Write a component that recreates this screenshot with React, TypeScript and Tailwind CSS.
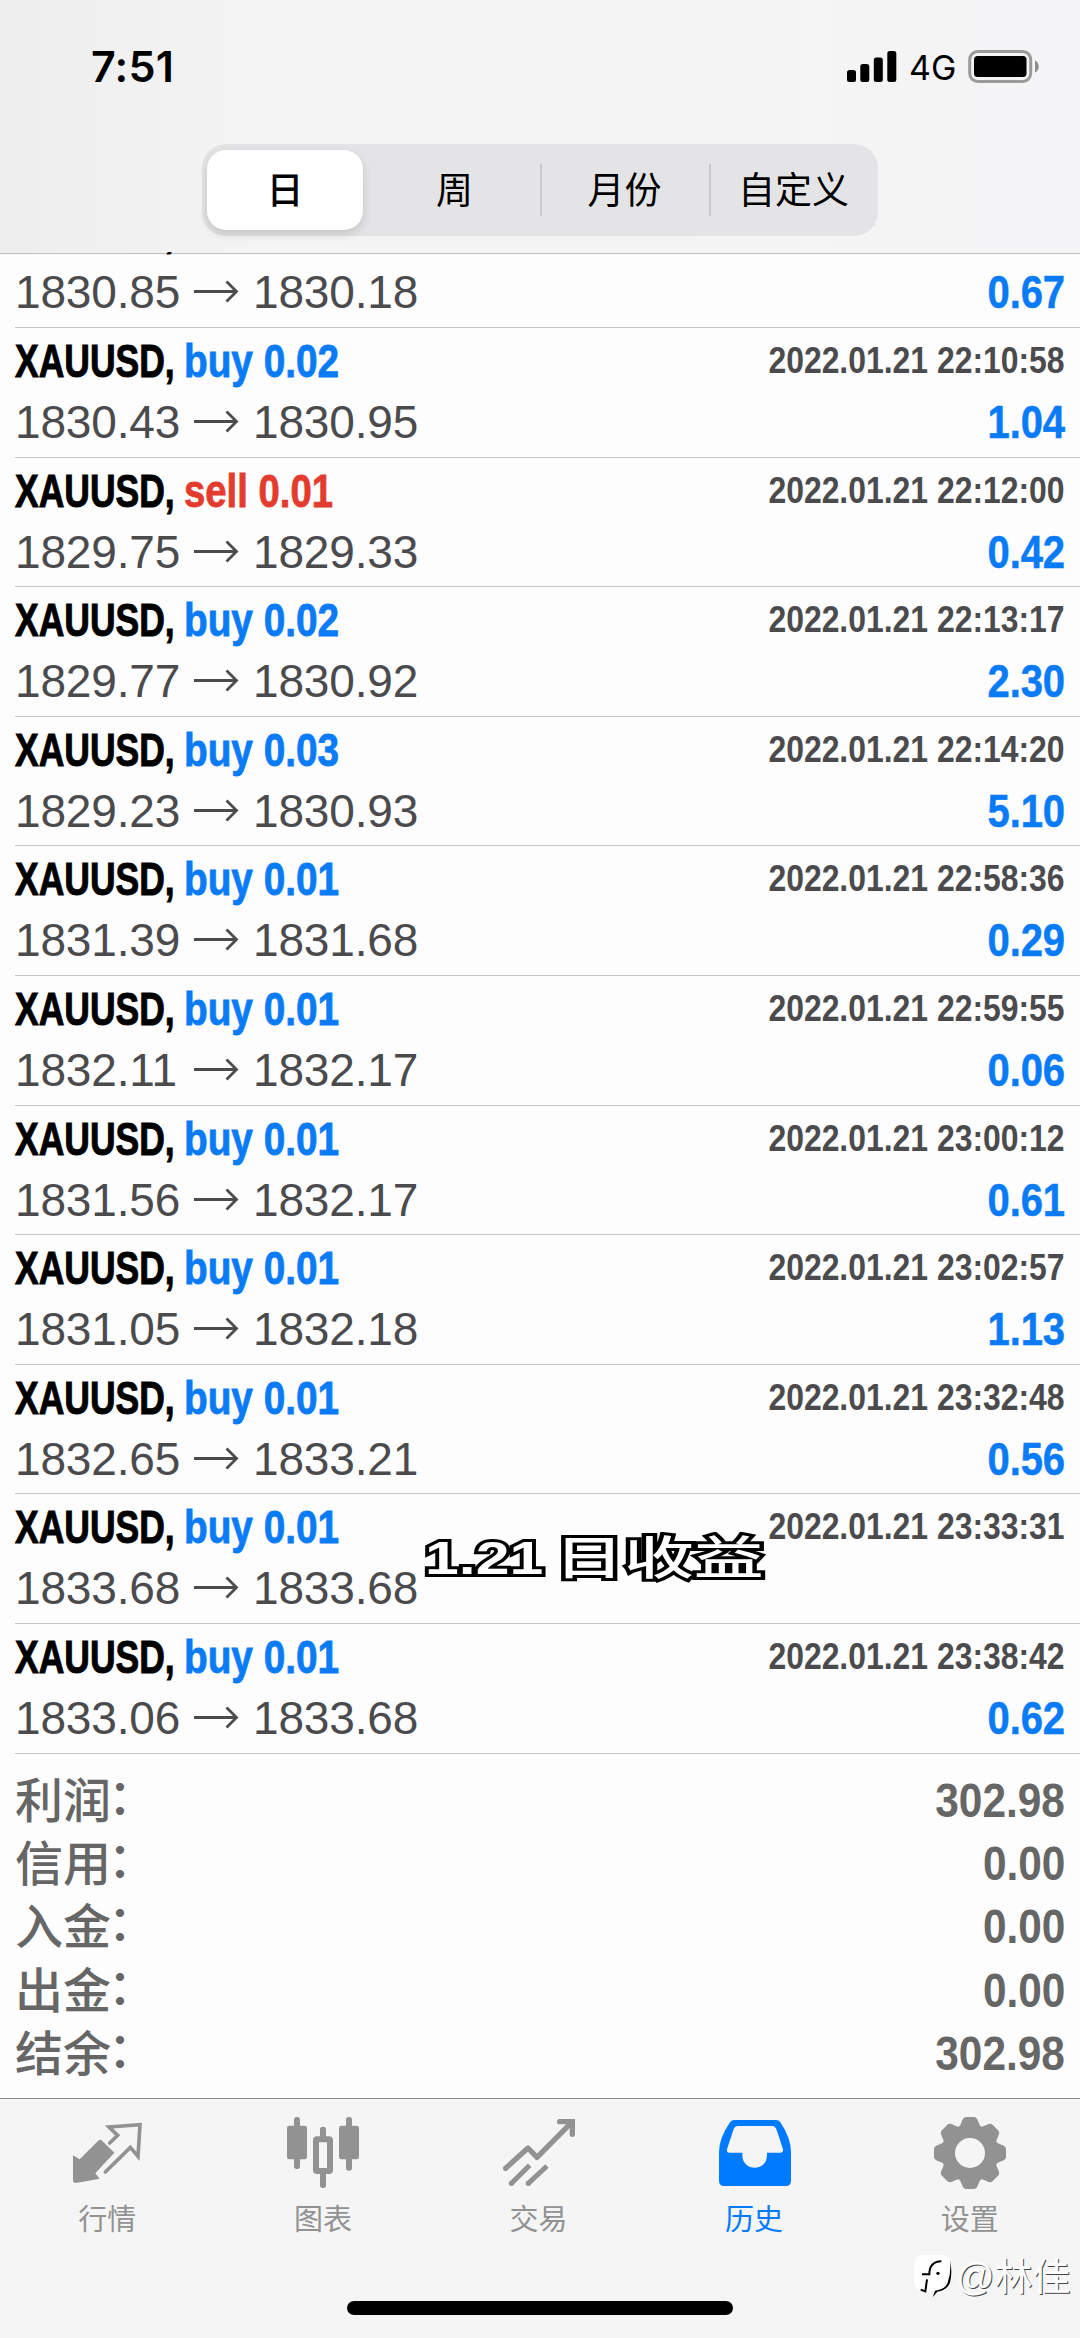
import type { ReactNode } from 'react'

type Deal = {
  side: 'buy' | 'sell'
  volume: string
  time?: string
  open: string
  close: string
  profit?: string
}

const deals: Deal[] = [
  { side: 'sell', volume: '0.01', open: '1830.85', close: '1830.18', profit: '0.67' },
  { side: 'buy', volume: '0.02', time: '2022.01.21 22:10:58', open: '1830.43', close: '1830.95', profit: '1.04' },
  { side: 'sell', volume: '0.01', time: '2022.01.21 22:12:00', open: '1829.75', close: '1829.33', profit: '0.42' },
  { side: 'buy', volume: '0.02', time: '2022.01.21 22:13:17', open: '1829.77', close: '1830.92', profit: '2.30' },
  { side: 'buy', volume: '0.03', time: '2022.01.21 22:14:20', open: '1829.23', close: '1830.93', profit: '5.10' },
  { side: 'buy', volume: '0.01', time: '2022.01.21 22:58:36', open: '1831.39', close: '1831.68', profit: '0.29' },
  { side: 'buy', volume: '0.01', time: '2022.01.21 22:59:55', open: '1832.11', close: '1832.17', profit: '0.06' },
  { side: 'buy', volume: '0.01', time: '2022.01.21 23:00:12', open: '1831.56', close: '1832.17', profit: '0.61' },
  { side: 'buy', volume: '0.01', time: '2022.01.21 23:02:57', open: '1831.05', close: '1832.18', profit: '1.13' },
  { side: 'buy', volume: '0.01', time: '2022.01.21 23:32:48', open: '1832.65', close: '1833.21', profit: '0.56' },
  { side: 'buy', volume: '0.01', time: '2022.01.21 23:33:31', open: '1833.68', close: '1833.68' },
  { side: 'buy', volume: '0.01', time: '2022.01.21 23:38:42', open: '1833.06', close: '1833.68', profit: '0.62' },
]

const totals = [
  { label: '利润', value: '302.98' },
  { label: '信用', value: '0.00' },
  { label: '入金', value: '0.00' },
  { label: '出金', value: '0.00' },
  { label: '结余', value: '302.98' },
]

const periods = ['日', '周', '月份', '自定义']

function StatusBar() {
  return (
    <div className="flex h-[144px] items-start justify-between pr-[40px] pl-[91px] font-['Inter',sans-serif]">
      <span className="mt-[39px] text-[43px] leading-[54px] font-semibold tracking-[0.2px]">7:51</span>
      <div className="mt-[49px] flex h-[36px] items-start">
        <svg className="mt-[2px] h-[31px] w-[50px]" viewBox="0 0 50 31">
          <rect x="0" y="19" width="9" height="12" rx="2.5" />
          <rect x="13.3" y="13" width="9" height="18" rx="2.5" />
          <rect x="26.8" y="6.6" width="9" height="24.4" rx="2.5" />
          <rect x="40.3" y="0" width="9" height="31" rx="2.5" />
        </svg>
        <span className="ml-[12px] w-[59px] text-[34px] leading-[38px]">4G</span>
        <svg className="mt-[1px] h-[33px] w-[72px]" viewBox="0 0 72 33">
          <rect x="1.7" y="1.5" width="61" height="30" rx="8" fill="none" stroke="#9a9a9b" strokeWidth="3" />
          <rect x="6" y="6" width="52.5" height="21" rx="3.5" />
          <path d="M67 10.5c5 2 5 10 0 12z" fill="#8e8e8f" />
        </svg>
      </div>
    </div>
  )
}

function PeriodPicker() {
  return (
    <div className="mx-auto flex h-[92px] w-[676px] items-center rounded-[24px] bg-[#e4e4e6] text-[37px] leading-none">
      {periods.map((period, i) => (
        <div key={period} className="flex h-full flex-1 items-center">
          {i === 0 ? (
            <div className="ml-[5px] flex h-[80px] w-[156px] items-center justify-center rounded-[19px] bg-white font-medium shadow-[0_4px_10px_rgba(0,0,0,0.14)]">
              <span className="mt-[3px]">{period}</span>
            </div>
          ) : (
            <div className="flex h-full flex-1 items-center">
              <div className={i > 1 ? 'h-[52px] w-[2px] bg-[#c9c9cc]' : 'h-[52px]'} />
              <span className="mt-[3px] flex-1 pr-[2px] text-center">{period}</span>
            </div>
          )}
        </div>
      ))}
    </div>
  )
}

function DealRow({ deal }: { deal: Deal }) {
  return (
    <div className="ml-[15px] h-[129.6px] shrink-0 border-b border-[#c4c4c7] pt-[6px] pr-[15px]">
      <div className="flex h-[61px] items-start justify-between font-bold whitespace-nowrap">
        <div className="flex text-[47px] leading-[54px]">
          <span className="w-[169px]">
            <span className="inline-block origin-left scale-x-[0.755] text-black [-webkit-text-stroke:1px_black]">
              XAUUSD,
            </span>
          </span>
          <span
            className={
              deal.side === 'buy'
                ? 'inline-block origin-left scale-x-[0.825] text-[#0a7bf6] [-webkit-text-stroke:0.8px_#0a7bf6]'
                : 'inline-block origin-left scale-x-[0.815] text-[#e33b2e] [-webkit-text-stroke:0.8px_#e33b2e]'
            }
          >
            {deal.side} {deal.volume}
          </span>
        </div>
        <span className="inline-block origin-right scale-x-[0.862] text-[37px] leading-[54px] text-[#4b4b4e]">
          {deal.time}
        </span>
      </div>
      <div className="flex items-start justify-between text-[46px] leading-[54px] tracking-[-0.15px] whitespace-nowrap">
        <div className="flex text-[#4b4b4e]">
          <span className="w-[178px]">{deal.open}</span>
          <svg className="mt-[12px] h-[28px] w-[60px]" viewBox="0 0 60 28" fill="none" stroke="#4b4b4e" strokeWidth="2.8">
            <path d="M1 14.5H43M33.5 4.5L43.5 14.5L33.5 24.5" />
          </svg>
          <span>{deal.close}</span>
        </div>
        <span className="inline-block origin-right scale-x-[0.87] font-bold text-[#0a7bf6] [-webkit-text-stroke:0.5px_#0a7bf6]">
          {deal.profit}
        </span>
      </div>
    </div>
  )
}

function Tab({ label, active, children }: { label: string; active?: boolean; children: ReactNode }) {
  return (
    <div className={active ? 'flex flex-1 flex-col items-center text-[#007aff]' : 'flex flex-1 flex-col items-center text-[#929292]'}>
      {children}
      <span className="mt-[11px] pr-[1px] text-[29px] leading-[40px]">{label}</span>
    </div>
  )
}

function TabBar() {
  return (
    <nav className="flex pr-[2px] pt-[18px]">
      <Tab label="行情">
        <svg className="size-[72px]" viewBox="213 81 216 216" fill="none" stroke="currentColor" strokeWidth="11">
          <path d="M301 150L340 188L283 250L296 266L225 279Q216 279 216 270V196L236 208L291 153Q296 148 301 150Z" fill="currentColor" stroke="none" />
          <path d="M326 159L350 136L324 111L417 104L411 199L388 172L313 246" strokeLinecap="round" />
        </svg>
      </Tab>
      <Tab label="图表">
        <svg className="size-[72px]" viewBox="861 81 216 216" fill="currentColor">
          <rect x="882" y="81" width="18" height="156" rx="8" />
          <rect x="861" y="107" width="60" height="101" rx="7" />
          <rect x="1038" y="81" width="18" height="161" rx="8" />
          <rect x="1017" y="107" width="60" height="101" rx="7" />
          <rect x="960" y="110" width="18" height="38" rx="8" />
          <rect x="960" y="240" width="18" height="54" rx="8" />
          <rect x="948" y="148" width="42" height="95" rx="3" fill="none" stroke="currentColor" strokeWidth="18" />
        </svg>
      </Tab>
      <Tab label="交易">
        <svg className="size-[72px]" viewBox="309 81 216 216" fill="none" stroke="currentColor" strokeWidth="16">
          <path d="M317 235L384 174L411 202L512 100" strokeLinecap="round" strokeLinejoin="round" />
          <path d="M479 95H517V133" strokeLinecap="round" />
          <path d="M333 281L389 226M384 281L441 228" strokeWidth="15" />
          <circle cx="334" cy="280" r="4" strokeWidth="8" />
          <circle cx="385" cy="280" r="4" strokeWidth="8" />
        </svg>
      </Tab>
      <Tab label="历史" active>
        <svg className="size-[72px]" viewBox="957 81 216 216" fill="currentColor">
          <path
            fillRule="evenodd"
            d="M1003 90H1128Q1136 90 1141 97Q1173 145 1173 186V272Q1173 288 1157 288H973Q957 288 957 272V186Q957 145 990 97Q995 90 1003 90ZM1014 108Q1005 108 1001 117L981 178Q979 188 988 188H1027V196C1027 246 1101 246 1101 196V188H1141Q1151 188 1149 178L1130 120Q1126 108 1116 108Z"
          />
        </svg>
      </Tab>
      <Tab label="设置">
        <svg className="size-[72px]" viewBox="405 81 216 216">
          <circle cx="513" cy="189" r="65" fill="none" stroke="currentColor" strokeWidth="40" />
          {[0, 45, 90, 135, 180, 225, 270, 315].map((angle) => (
            <path
              key={angle}
              d="M474 118Q486 106 489 93Q493 81 502 81H524Q533 81 537 93Q540 106 552 118L540 130H486Z"
              transform={`rotate(${angle} 513 189)`}
              fill="currentColor"
            />
          ))}
        </svg>
      </Tab>
    </nav>
  )
}

function Watermark() {
  return (
    <div className="absolute top-[2252px] left-[912px] flex items-center whitespace-nowrap">
      <svg className="h-[50px] w-[44px]" viewBox="336 498 132 150">
        <path d="M372 506H428Q453 508 453 540V575Q450 608 425 614L400 632L403 616H372Q342 612 342 580V540Q342 508 372 506Z" fill="white" />
        <path d="M450 522Q458 560 450 590Q440 614 412 617L398 634L405 614Q436 610 443 590Q454 560 450 522Z" fill="black" />
        <path d="M366 565H388Q388 527 424 526M381 580L376 616L362 611" fill="none" stroke="black" strokeWidth="6" />
        <circle cx="414" cy="562" r="5" />
      </svg>
      <span className="text-[38px] leading-[48px] text-white [text-shadow:1px_1px_0_#444]">@林佳</span>
    </div>
  )
}

export default function App() {
  return (
    <div className="relative flex h-[2338px] w-[1080px] flex-col overflow-hidden bg-[#fdfdfd] font-['Liberation_Sans','Noto_Sans_CJK_SC',sans-serif] text-black">
      <header className="h-[254px] shrink-0 border-b border-[#bdbdc0] bg-linear-to-r from-[#eeeeee] via-[#f5f4f4] via-25% to-[#f4f4f6]">
        <StatusBar />
        <PeriodPicker />
      </header>

      <main className="relative -mt-[2px] flex h-[1846px] shrink-0 flex-col overflow-hidden">
        <div className="-mt-[53.6px] flex flex-col">
          {deals.map((deal, i) => (
            <DealRow key={i} deal={deal} />
          ))}
        </div>
        <div className="px-[15px] pt-[14px] text-[#666]">
          {totals.map((total) => (
            <div key={total.label} className="flex h-[63.4px] items-start justify-between text-[49px] leading-[64px]">
              <span className="-mt-[3px] flex font-['Noto_Sans_CJK_SC',sans-serif] text-[48px] font-medium">
                {total.label}
                <span className="-mt-[4px] -ml-[3px]">：</span>
              </span>
              <span className="inline-block origin-right scale-x-[0.865] font-bold">{total.value}</span>
            </div>
          ))}
        </div>
      </main>

      <footer className="flex flex-1 flex-col border-t border-[#8a8a8c] bg-[#f5f5f5]">
        <TabBar />
        <div className="mx-auto mt-[61px] h-[14px] w-[386px] rounded-full bg-black" />
      </footer>

      {/* caption stamped over the list */}
      <div className="absolute top-[1526px] left-[425px] flex text-[46px] leading-[64px] whitespace-nowrap text-white [-webkit-text-stroke:6px_black] [paint-order:stroke_fill]">
        <span className="w-[129px]">
          <span className="inline-block origin-left scale-x-[1.32] font-bold">1.21</span>
        </span>
        <span className="inline-block origin-left scale-x-[1.52] font-medium">日收益</span>
      </div>
      <Watermark />
    </div>
  )
}
